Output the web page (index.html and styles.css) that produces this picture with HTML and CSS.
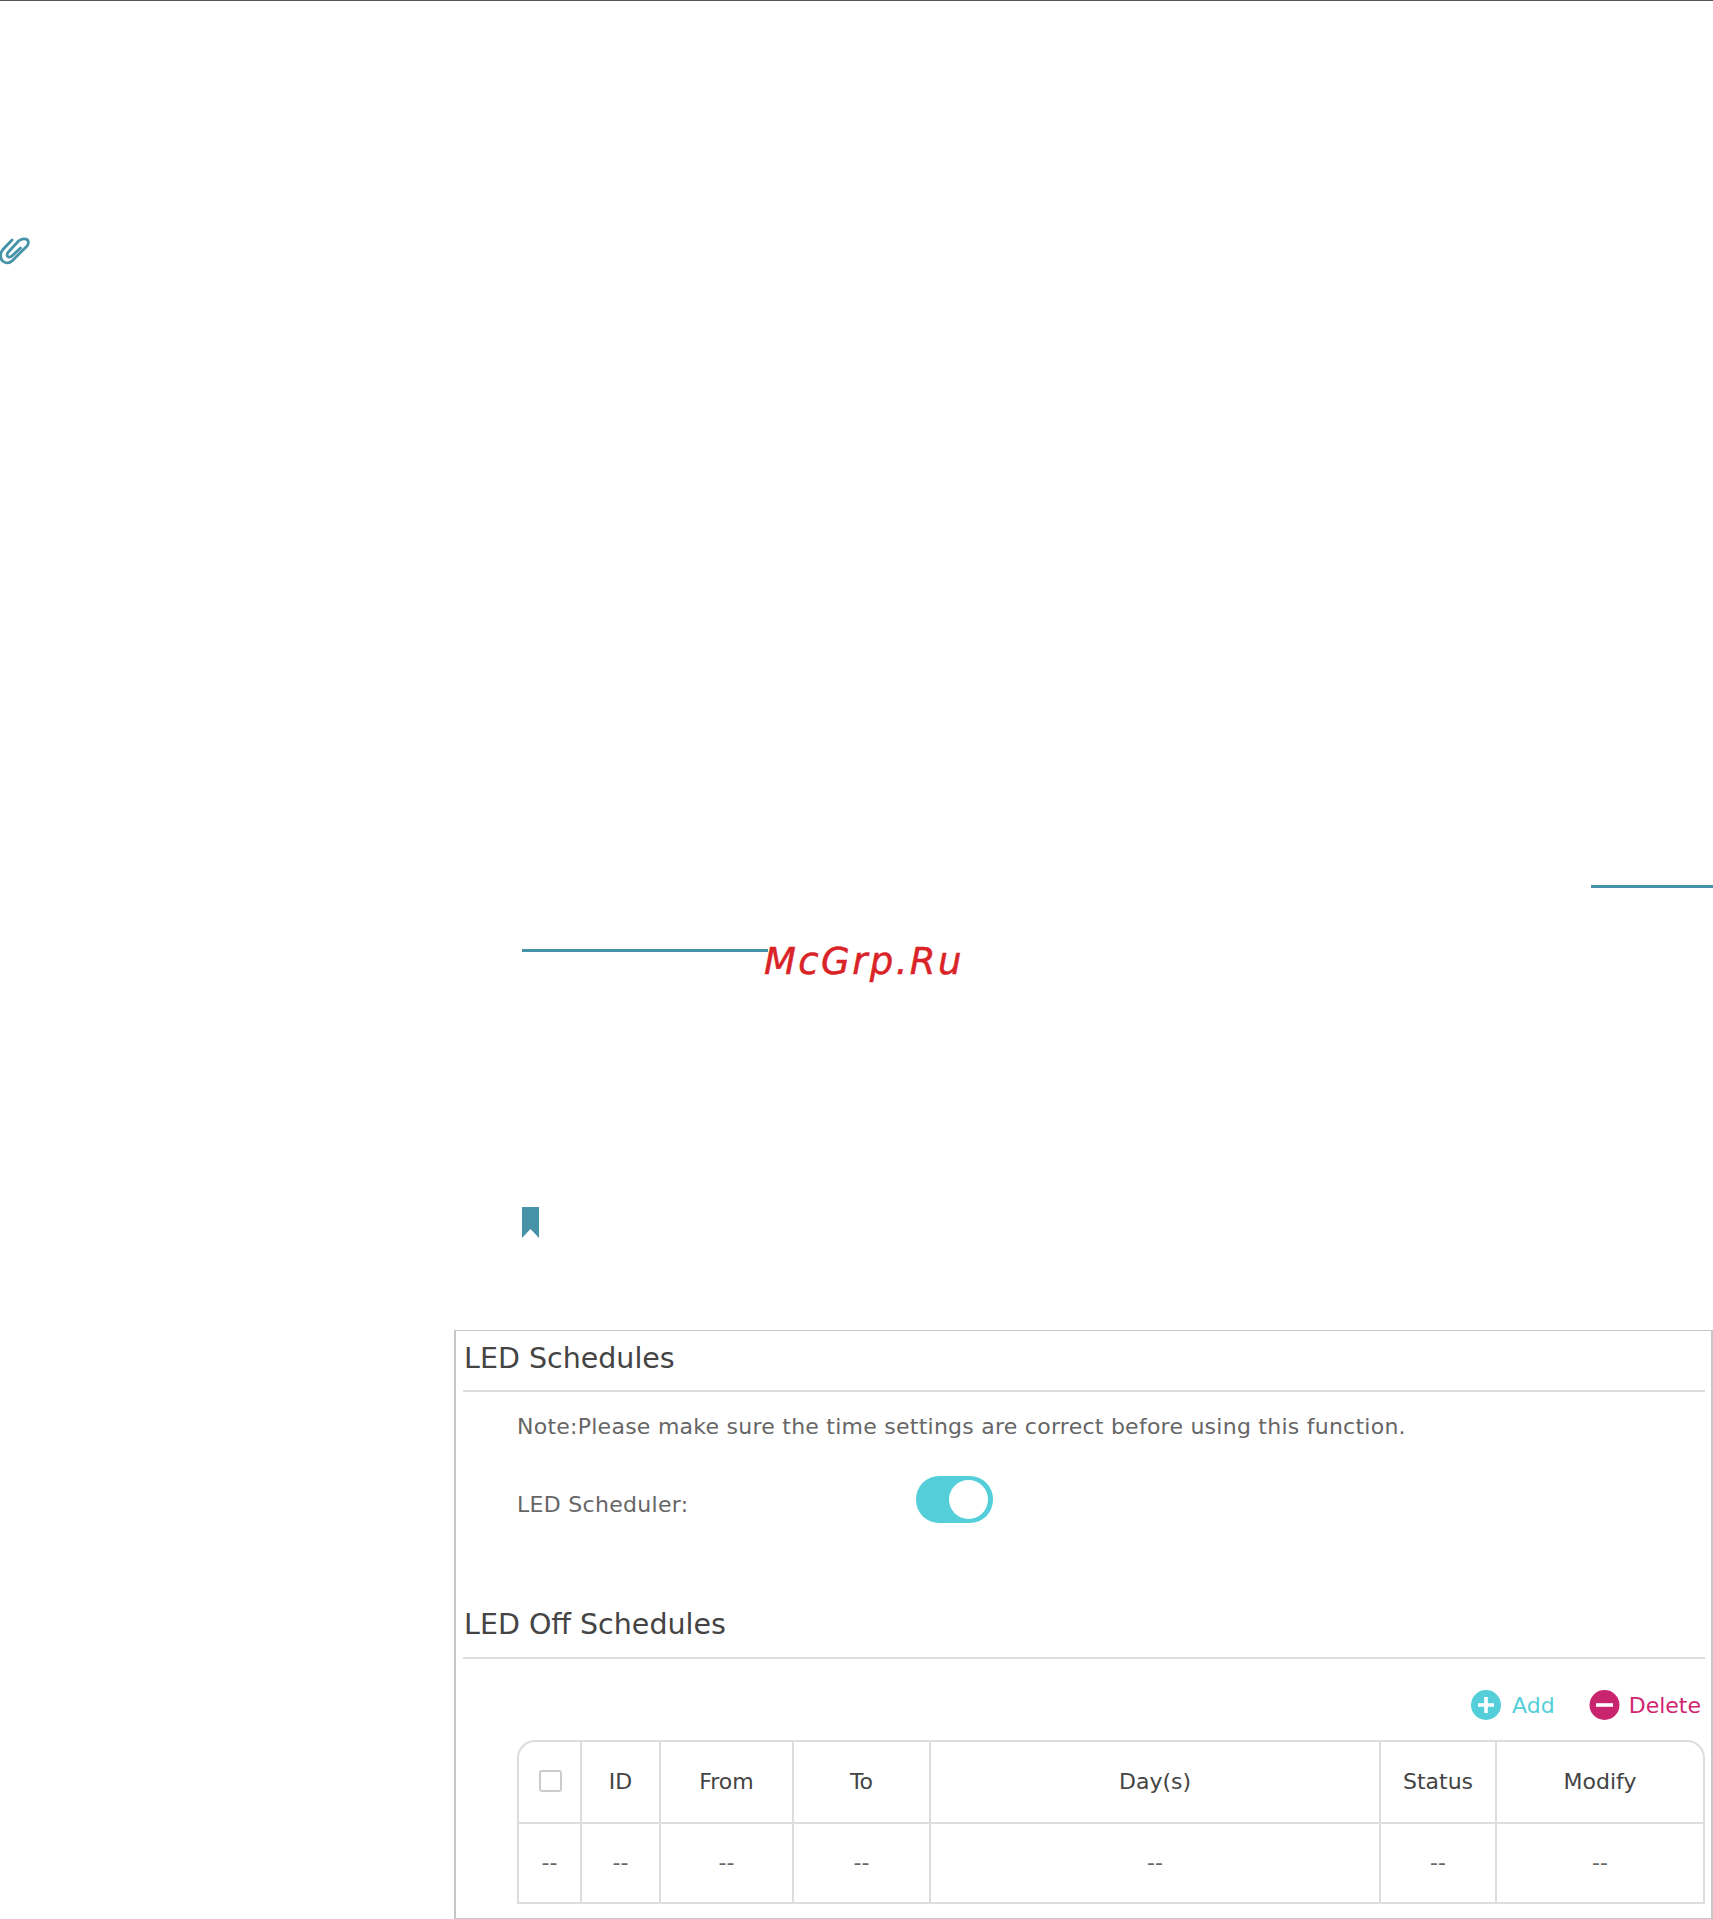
FILE: index.html
```html
<!DOCTYPE html>
<html lang="en">
<head>
<meta charset="utf-8">
<title>LED Schedules</title>
<link rel="stylesheet" href="styles.css">
</head>
<body>
<div class="page">
  <div class="top-rule"></div>
  <svg class="clip" width="30" height="30" viewBox="0 0 30 30" aria-hidden="true">
    <path d="M12 3 L2.5 13 C-0.5 17 0 24 5 25.5 C8 26.5 10.5 25.5 12.5 23.5 L27 9 C29.5 6 28.5 2.5 25.5 2 C23 1.4 20.5 2.2 18.5 4 L8 15.5 C6.5 17.5 7 19.5 8.5 20 C10 20.5 11 20 12.5 18.5 L20.5 11" fill="none" stroke="#4693a8" stroke-width="2.8" stroke-linecap="round"/>
  </svg>
  <div class="rule rule-right"></div>
  <div class="rule rule-left"></div>
  <svg class="bookmark" width="17" height="31" viewBox="0 0 17 31" aria-hidden="true">
    <path d="M0 0 H17 V31 L8.5 22 L0 31 Z" fill="#4693a8"/>
  </svg>
  <div class="watermark">McGrp.Ru</div>

  <section class="card">
    <h2 class="title title-first">LED Schedules</h2>
    <p class="note">Note:Please make sure the time settings are correct before using this function.</p>
    <div class="setting">
      <span class="setting-label">LED Scheduler:</span>
      <span class="toggle"><span class="knob"></span></span>
    </div>
    <h2 class="title title-second">LED Off Schedules</h2>
    <div class="actions">
      <span class="action action-add">
        <svg class="action-icon" width="30" height="30" viewBox="0 0 30 30" aria-hidden="true">
          <circle cx="15" cy="15" r="15" fill="#54cfd9"/>
          <path d="M15 7 V23 M7 15 H23" stroke="#fff" stroke-width="3.6" fill="none"/>
        </svg>
        Add
      </span>
      <span class="action action-delete">
        <svg class="action-icon" width="31" height="30" viewBox="0 0 31 30" aria-hidden="true">
          <circle cx="15.5" cy="15" r="15" fill="#c9246e"/>
          <path d="M7 15 H24" stroke="#fff" stroke-width="3.6" fill="none"/>
        </svg>
        Delete
      </span>
    </div>
    <table class="grid">
      <colgroup>
        <col class="c-check"><col class="c-id"><col class="c-from"><col class="c-to"><col class="c-days"><col class="c-status"><col class="c-modify">
      </colgroup>
      <thead>
        <tr>
          <th><span class="checkbox"></span></th>
          <th>ID</th><th>From</th><th>To</th><th>Day(s)</th><th>Status</th><th>Modify</th>
        </tr>
      </thead>
      <tbody>
        <tr>
          <td>--</td><td>--</td><td>--</td><td>--</td><td>--</td><td>--</td><td>--</td>
        </tr>
      </tbody>
    </table>
  </section>
</div>
</body>
</html>
```
FILE: styles.css
```css
* { box-sizing: border-box; }
html, body { margin: 0; padding: 0; background: #fff; }
.page {
  position: relative;
  width: 1713px;
  height: 1919px;
  overflow: hidden;
  font-family: "DejaVu Sans", sans-serif;
}
.top-rule { height: 1px; background: #555; }
.clip { display: block; margin-top: 236px; }
.rule { height: 3px; background: #4693a8; }
.rule-right { width: 122px; margin: 618px 0 0 1591px; }
.rule-left { width: 246px; margin: 61px 0 0 522px; }
.bookmark { display: block; margin: 255px 0 0 522px; }
.watermark {
  position: absolute;
  left: 764px;
  top: 940px;
  font-style: italic;
  font-size: 37px;
  line-height: 44px;
  letter-spacing: 2.4px;
  color: #d92327;
  -webkit-text-stroke: 0.5px #d92327;
}
.card {
  width: 1259px;
  height: 589px;
  margin: 92px 0 0 454px;
  padding: 0 6px 0 7px;
  border: 2px solid #c6c6c6;
  border-top-width: 1px;
  border-bottom-width: 1px;
}
.title {
  margin: 0;
  padding: 0 0 0 1px;
  font-size: 28.5px;
  font-weight: 400;
  color: #444;
  border-bottom: 2px solid #ddd;
}
.title-first { height: 61px; line-height: 56px; }
.title-second { height: 60px; line-height: 52px; margin-top: 76px; }
.note {
  margin: 20px 0 0 54px;
  font-size: 22px;
  line-height: 30px;
  letter-spacing: 0.25px;
  color: #666;
}
.setting {
  display: flex;
  align-items: center;
  height: 47px;
  margin: 34px 0 0 54px;
}
.setting-label {
  width: 399px;
  padding-top: 9px;
  font-size: 22px;
  letter-spacing: 0.3px;
  color: #666;
}
.toggle {
  position: relative;
  display: block;
  width: 77px;
  height: 47px;
  border-radius: 23px;
  background: #54cfd9;
}
.knob {
  position: absolute;
  top: 4px;
  right: 5px;
  width: 39px;
  height: 39px;
  border-radius: 50%;
  background: #fff;
}
.actions {
  display: flex;
  justify-content: flex-end;
  gap: 34px;
  height: 30px;
  margin: 31px 4px 0 0;
}
.action {
  display: flex;
  align-items: center;
  font-size: 22px;
}
.action-icon { display: block; flex: none; }
.action-add { gap: 11px; color: #54cfd9; }
.action-delete { gap: 9px; color: #d0246f; }
.grid {
  width: 1188px;
  margin: 20px 0 0 54px;
  table-layout: fixed;
  border-collapse: separate;
  border-spacing: 0;
  font-size: 22px;
  text-align: center;
}
.c-check { width: 63px; }
.c-id { width: 79px; }
.c-from { width: 133px; }
.c-to { width: 137px; }
.c-days { width: 450px; }
.c-status { width: 116px; }
.c-modify { width: 210px; }
.grid th, .grid td {
  padding: 0 0 2px;
  border-left: 2px solid #ddd;
  border-bottom: 2px solid #ddd;
}
.grid th:last-child, .grid td:last-child { border-right: 2px solid #ddd; }
.grid th {
  height: 84px;
  border-top: 2px solid #ddd;
  font-weight: 400;
  color: #444;
}
.grid th:first-child { border-top-left-radius: 18px; }
.grid th:last-child { border-top-right-radius: 18px; }
.grid td { height: 80px; color: #666; }
.checkbox {
  display: block;
  width: 23px;
  height: 22px;
  margin: 0 0 0 20px;
  border: 2px solid #ccc;
  border-radius: 3px;
}
```
